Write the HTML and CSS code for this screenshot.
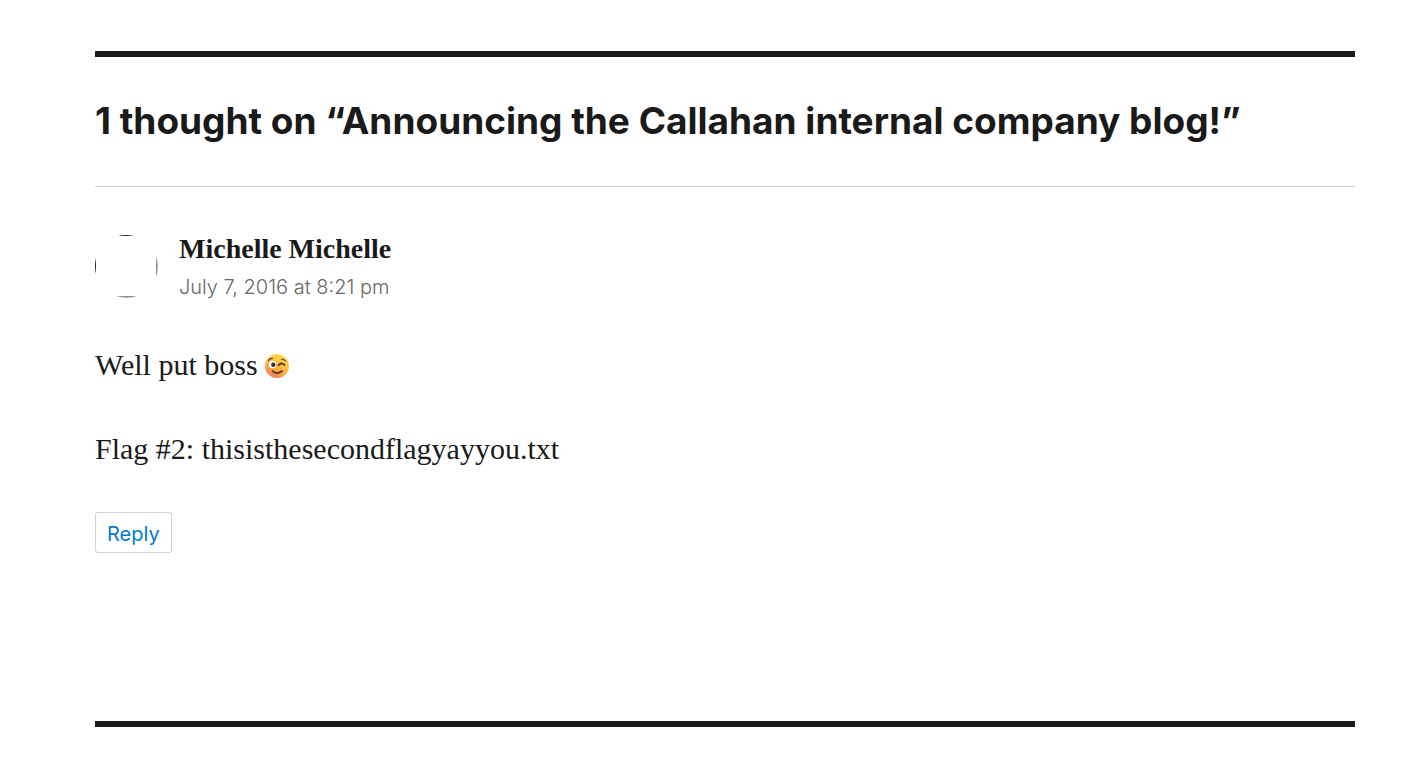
FILE: index.html
```html
<!DOCTYPE html>
<html lang="en">
<head>
<meta charset="utf-8">
<meta name="viewport" content="width=device-width, initial-scale=1">
<title>Announcing the Callahan internal company blog!</title>
<link rel="stylesheet" href="styles.css">
</head>
<body>
<main class="comments">
  <h2 class="comments-title">1 thought on “Announcing the Callahan internal company blog!”</h2>
  <article class="comment">
    <header class="comment-header">
      <svg class="avatar" viewBox="0 0 63 63" aria-hidden="true">
        <path fill="#222" d="M23 1Q31 -1 39 1zM1 23Q-1 31 1 39z"/>
        <path fill="#909090" d="M61 21Q64.5 31.5 61 42zM21 61Q31.500 64.5 42 61z"/>
      </svg>
      <div class="comment-meta">
        <b class="author">Michelle Michelle</b>
        <time class="date" datetime="2016-07-07T20:21">July 7, 2016 at 8:21 pm</time>
      </div>
    </header>
    <div class="comment-content">
      <p>Well put boss <svg class="emoji" viewBox="0 0 24 24" role="img" aria-label="Winking face">
        <defs>
          <linearGradient id="face" x1=".8" y1="0" x2=".25" y2="1">
            <stop offset="0" stop-color="#ffe04f"/>
            <stop offset=".6" stop-color="#fdb13d"/>
            <stop offset="1" stop-color="#ef7460"/>
          </linearGradient>
        </defs>
        <circle cx="12" cy="12" r="12" fill="url(#face)"/>
        <circle cx="7.500" cy="10.500" r="3.700" fill="#fff"/>
        <circle cx="8.300" cy="10.700" r="2.200" fill="#432b3c"/>
        <g fill="none" stroke="#5c3738" stroke-linecap="round">
          <path stroke-width="1.800" d="M13.500 11.400Q16.500 7.800 19.500 11"/>
          <path stroke-width="1.200" d="M3.500 6.500Q5 4.300 7.500 4.300M16.500 5Q19 5 20.300 7"/>
          <path stroke-width="1.900" d="M7.700 17.200Q12 21 17 17"/>
        </g>
      </svg></p>
      <p>Flag #2: thisisthesecondflagyayyou.txt</p>
    </div>
    <a class="reply" href="#respond">Reply</a>
  </article>
</main>
</body>
</html>
```

FILE: styles.css
```css
* {
  box-sizing: border-box;
}

body {
  margin: 0;
  background: #fff;
  color: #1a1a1a;
  font-family: "Liberation Serif", serif;
}

.comments {
  margin: 51px 47px 50px 95px;
  padding-bottom: 168px;
  border-top: 6px solid #1a1a1a;
  border-bottom: 6px solid #1a1a1a;
}

.comments-title {
  margin: 0;
  padding: 43px 0 44px;
  font: 700 37px/42px Inter, sans-serif;
}

.comment {
  padding-top: 48px;
  border-top: 1px solid #d1d1d1;
}

.comment-header {
  display: flex;
  gap: 21px;
  margin-bottom: 43px;
}

.avatar {
  width: 63px;
  height: 63px;
}

.comment-meta {
  display: flex;
  flex-direction: column;
}

.author {
  font-size: 28px;
  line-height: 28px;
}

.date {
  margin-top: 10px;
  color: #686868;
  font: 300 20px/28px Inter, sans-serif;
}

.comment-content {
  font-size: 30px;
  line-height: 42px;
}

.comment-content p {
  margin: 0 0 42px;
}

.emoji {
  width: 24px;
  height: 24px;
  vertical-align: -3px;
}

.reply {
  display: inline-block;
  padding: 8px 11px 5px;
  border: 1px solid #d1d1d1;
  border-radius: 3px;
  color: #007acc;
  font: 400 20px/26px Inter, sans-serif;
  text-decoration: none;
}
```
